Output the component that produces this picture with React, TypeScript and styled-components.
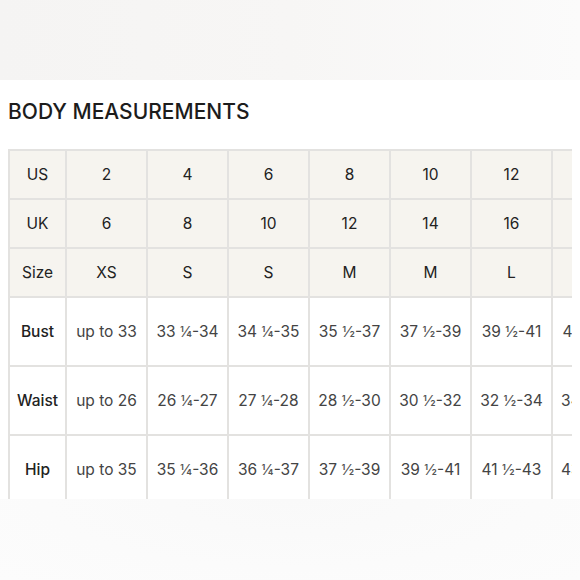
import styled, { createGlobalStyle } from "styled-components";

const GlobalStyle = createGlobalStyle`
  html, body {
    margin: 0;
    padding: 0;
    background: #ffffff;
  }
  body {
    font-family: Inter, "Noto Sans", sans-serif;
    color: #222;
  }
`;

const Page = styled.div`
  width: 580px;
  height: 580px;
  display: flex;
  flex-direction: column;
  overflow: hidden;
  background: #ffffff;
`;

const TopBand = styled.div`
  height: 80px;
  flex-shrink: 0;
  background: linear-gradient(90deg, #f5f4f3 0%, #f7f6f5 50%, #fbfbfb 100%);
`;

const Title = styled.h2`
  margin: 19px 0 0 8px;
  font-size: 21px;
  line-height: 26px;
  font-weight: 500;
  letter-spacing: 0;
  color: #1c1c1c;
`;

const TableClip = styled.div`
  margin: 24px 0 0 8px;
  width: 564px;
  height: 350px;
  overflow: hidden;
  flex-shrink: 0;
`;

const Table = styled.table`
  border-collapse: collapse;
  table-layout: fixed;
  width: 704px;
`;

const Cell = styled.td<{ $head?: boolean; $label?: boolean }>`
  border: 2px solid #e3e2e0;
  padding: 0;
  text-align: center;
  vertical-align: middle;
  white-space: nowrap;
  font-size: 15.5px;
  height: ${(p) => (p.$head ? 47 : 67)}px;
  background: ${(p) => (p.$head ? "#f6f4ef" : "#ffffff")};
  color: ${(p) => (p.$head || p.$label ? "#222" : "#444")};
  font-weight: ${(p) => (p.$label ? 500 : 400)};
`;

const Frac = styled.span`
  font-size: 15px;
  color: #555;
`;

const BottomBand = styled.div`
  flex: 1;
  background: radial-gradient(ellipse at 50% 0%, #f9f9f9 0%, #fbfbfb 60%, #fcfcfc 100%);
`;

const headRows = [
  { label: "US", values: ["2", "4", "6", "8", "10", "12", "14", "16"] },
  { label: "UK", values: ["6", "8", "10", "12", "14", "16", "18", "20"] },
  { label: "Size", values: ["XS", "S", "S", "M", "M", "L", "L", "XL"] },
];

type Range = { from: string; frac?: string; to?: string };

const bodyRows: { label: string; values: Range[] }[] = [
  {
    label: "Bust",
    values: [
      { from: "up to 33" },
      { from: "33", frac: "¼", to: "34" },
      { from: "34", frac: "¼", to: "35" },
      { from: "35", frac: "½", to: "37" },
      { from: "37", frac: "½", to: "39" },
      { from: "39", frac: "½", to: "41" },
      { from: "41", frac: "½", to: "43" },
      { from: "43", frac: "½", to: "45" },
    ],
  },
  {
    label: "Waist",
    values: [
      { from: "up to 26" },
      { from: "26", frac: "¼", to: "27" },
      { from: "27", frac: "¼", to: "28" },
      { from: "28", frac: "½", to: "30" },
      { from: "30", frac: "½", to: "32" },
      { from: "32", frac: "½", to: "34" },
      { from: "34", frac: "½", to: "36" },
      { from: "36", frac: "½", to: "38" },
    ],
  },
  {
    label: "Hip",
    values: [
      { from: "up to 35" },
      { from: "35", frac: "¼", to: "36" },
      { from: "36", frac: "¼", to: "37" },
      { from: "37", frac: "½", to: "39" },
      { from: "39", frac: "½", to: "41" },
      { from: "41", frac: "½", to: "43" },
      { from: "43", frac: "½", to: "45" },
      { from: "45", frac: "½", to: "47" },
    ],
  },
];

const App = () => {
  return (
    <Page>
      <GlobalStyle />
      <TopBand />
      <Title>BODY MEASUREMENTS</Title>
      <TableClip>
        <Table>
          <colgroup>
            <col style={{ width: 57 }} />
            {headRows[0].values.map((_, i) => (
              <col key={i} style={{ width: 81 }} />
            ))}
          </colgroup>
          <tbody>
            {headRows.map((row) => (
              <tr key={row.label}>
                <Cell $head>{row.label}</Cell>
                {row.values.map((v, i) => (
                  <Cell $head key={i}>
                    {v}
                  </Cell>
                ))}
              </tr>
            ))}
            {bodyRows.map((row) => (
              <tr key={row.label}>
                <Cell $label>{row.label}</Cell>
                {row.values.map((v, i) => (
                  <Cell key={i}>
                    {v.from}
                    {v.frac && (
                      <>
                        {" "}
                        <Frac>{v.frac}</Frac>-{v.to}
                      </>
                    )}
                  </Cell>
                ))}
              </tr>
            ))}
          </tbody>
        </Table>
      </TableClip>
      <BottomBand />
    </Page>
  );
};

export default App;
